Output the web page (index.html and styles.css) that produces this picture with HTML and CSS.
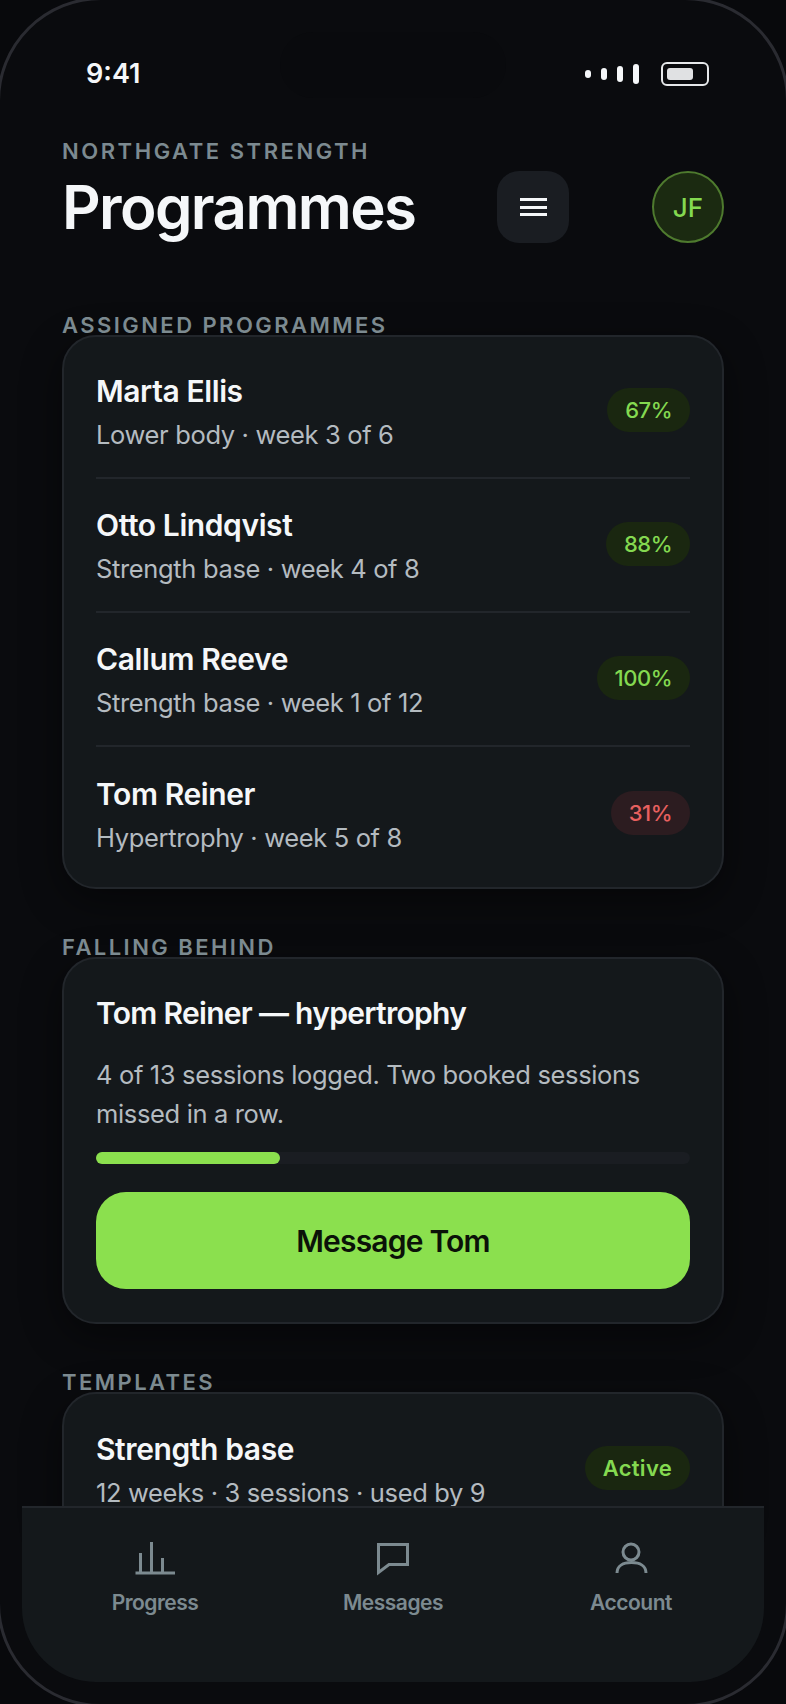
FILE: index.html
```html
<!DOCTYPE html>
<html lang="en">
<head>
    <meta charset="UTF-8">
    <meta name="viewport" content="width=device-width, initial-scale=1.0">
    <link rel="stylesheet" href="styles.css">
    <title>Programmes</title>
</head>
<body>

    <div class="phone">
        <div class="island"></div>

        <div class="status">
            <span class="time">9:41</span>
            <div class="status-icons">
                <div class="signal">
                    <span class="s1"></span>
                    <span class="s2"></span>
                    <span class="s3"></span>
                    <span class="s4"></span>
                </div>
                <div class="battery"><span></span></div>
            </div>
        </div>

        <div class="content">
            <div class="eyebrow">NORTHGATE STRENGTH</div>
            <header class="top">
                <h1>Programmes</h1>
                <button class="menu-btn" aria-label="Menu">
                    <span></span><span></span><span></span>
                </button>
                <div class="avatar">JF</div>
            </header>

            <h2 class="label first">ASSIGNED PROGRAMMES</h2>
            <section class="card list">
                <div class="row">
                    <div class="row-text">
                        <div class="name">Marta Ellis</div>
                        <div class="sub">Lower body · week 3 of 6</div>
                    </div>
                    <span class="pill">67%</span>
                </div>
                <div class="row">
                    <div class="row-text">
                        <div class="name">Otto Lindqvist</div>
                        <div class="sub">Strength base · week 4 of 8</div>
                    </div>
                    <span class="pill">88%</span>
                </div>
                <div class="row">
                    <div class="row-text">
                        <div class="name">Callum Reeve</div>
                        <div class="sub">Strength base · week 1 of 12</div>
                    </div>
                    <span class="pill">100%</span>
                </div>
                <div class="row">
                    <div class="row-text">
                        <div class="name">Tom Reiner</div>
                        <div class="sub">Hypertrophy · week 5 of 8</div>
                    </div>
                    <span class="pill red">31%</span>
                </div>
            </section>

            <h2 class="label">FALLING BEHIND</h2>
            <section class="card behind">
                <div class="name tight">Tom Reiner — hypertrophy</div>
                <p class="sub body">4 of 13 sessions logged. Two booked sessions missed in a row.</p>
                <div class="bar"><div class="bar-fill" style="width: 31%"></div></div>
                <button class="cta">Message Tom</button>
            </section>

            <h2 class="label">TEMPLATES</h2>
            <section class="card list">
                <div class="row">
                    <div class="row-text">
                        <div class="name">Strength base</div>
                        <div class="sub">12 weeks · 3 sessions · used by 9</div>
                    </div>
                    <span class="pill active">Active</span>
                </div>
            </section>
        </div>

        <nav class="tabs">
            <div class="tab">
                <svg width="44" height="36" viewBox="0 0 44 36"><path d="M2.5 33H42M7.5 33V13M18.5 33V2M29.5 33V18"/></svg>
                <span>Progress</span>
            </div>
            <div class="tab">
                <svg width="44" height="36" viewBox="0 0 44 36"><path d="M7.5 4.5H36.5V24.5H18L7.5 32.5Z"/></svg>
                <span>Messages</span>
            </div>
            <div class="tab">
                <svg width="44" height="36" viewBox="0 0 44 36"><circle cx="22" cy="12" r="8"/><path d="M8 33C8 26 14 22.5 22.5 22.5C31 22.5 37 26 37 33"/></svg>
                <span>Account</span>
            </div>
        </nav>
    </div>

</body>
</html>
```

FILE: styles.css
```css
* {
    box-sizing: border-box;
}

html, body {
    margin: 0;
    padding: 0;
}

body {
    width: 786px;
    height: 1704px;
    background-color: #08090c;
    font-family: 'Inter', sans-serif;
    color: #f5f7f9;
    overflow: hidden;
}

/* Le cadre dépasse un peu de la fenêtre : seuls les coins sont visibles */
.phone {
    position: relative;
    width: 792px;
    height: 1710px;
    margin: -3px;
    border: 3px solid #2a2b31;
    border-radius: 104px;
    background-color: #0a0b0e;
    overflow: hidden;
}

.island {
    position: absolute;
    top: 32px;
    left: 280px;
    width: 226px;
    height: 66px;
    border-radius: 33px;
    background-color: #090a0d;
}

/* Barre de statut */
.status {
    position: relative;
    display: flex;
    justify-content: space-between;
    align-items: center;
    height: 26px;
    margin-top: 61px;
    padding: 0 77px 0 86px;
}

.time {
    font-size: 27px;
    font-weight: 600;
    line-height: 26px;
}

.status-icons {
    display: flex;
    align-items: center;
    gap: 22px;
}

.signal {
    display: flex;
    align-items: center;
    gap: 10px;
}

.signal span {
    width: 6px;
    border-radius: 3px;
    background-color: #f5f7f9;
}

.s1 { height: 8px; }
.s2 { height: 12px; }
.s3 { height: 16px; }
.s4 { height: 20px; }

.battery {
    width: 48px;
    height: 24px;
    padding: 4px;
    border: 2px solid #e6e8ea;
    border-radius: 6px;
}

.battery span {
    display: block;
    width: 26px;
    height: 12px;
    border-radius: 3px;
    background-color: #e0e1e3;
}

/* Contenu */
.content {
    padding: 0 62px;
}

.eyebrow {
    margin-top: 51px;
    font-size: 22px;
    font-weight: 600;
    line-height: 26px;
    letter-spacing: 2.55px;
    color: #7c8a90;
}

.top {
    display: flex;
    align-items: center;
    margin-top: 7px;
}

h1 {
    flex: 1;
    margin: 0;
    font-size: 60px;
    font-weight: 600;
    line-height: 72px;
    letter-spacing: -1.6px;
    color: #f5f7f9;
}

.menu-btn {
    display: flex;
    flex-direction: column;
    align-items: center;
    justify-content: center;
    gap: 4.5px;
    width: 72px;
    height: 72px;
    margin-right: 83px;
    padding: 0;
    border: 0;
    border-radius: 22px;
    background-color: #1a1d22;
}

.menu-btn span {
    width: 27px;
    height: 3px;
    background-color: #f5f7f9;
}

.avatar {
    display: flex;
    align-items: center;
    justify-content: center;
    width: 72px;
    height: 72px;
    border: 2px solid #4e7a2e;
    border-radius: 50%;
    background-color: #1b2a11;
    color: #84d950;
    font-size: 26px;
    font-weight: 500;
}

.label {
    margin: 48px 0 0;
    font-size: 22px;
    font-weight: 600;
    line-height: 20px;
    letter-spacing: 2.45px;
    color: #7c8a90;
}

.label.first {
    margin-top: 72px;
}

.card {
    border: 2px solid #22262b;
    border-radius: 34px;
    background-color: #14181b;
    box-shadow: 0 12px 40px rgba(0, 0, 0, 0.45);
}

.list {
    padding: 8px 32px 6px;
}

.row {
    display: flex;
    align-items: center;
    justify-content: space-between;
    height: 134px;
    border-bottom: 2px solid #22262b;
}

.row:last-child {
    border-bottom: 0;
}

.row-text {
    padding-top: 3px;
}

.name {
    font-size: 30px;
    font-weight: 600;
    line-height: 38px;
    letter-spacing: -0.4px;
    color: #f5f7f9;
}

.name.tight {
    letter-spacing: -0.7px;
}

.sub {
    margin-top: 6px;
    font-size: 25.5px;
    font-weight: 400;
    line-height: 38px;
    letter-spacing: -0.35px;
    color: #b4bbc0;
}

.pill {
    margin-bottom: 2px;
    padding: 0 18px;
    border-radius: 22px;
    background-color: #1a2710;
    color: #84d950;
    font-size: 22px;
    font-weight: 500;
    line-height: 44px;
    letter-spacing: -0.5px;
}

.pill.active {
    font-weight: 600;
    letter-spacing: 0.3px;
}

.pill.red {
    background-color: #2c1c20;
    color: #e8605f;
}

.behind {
    padding: 35px 32px 33px;
}

.body {
    margin: 23px 0 0;
    line-height: 39px;
}

.bar {
    height: 12px;
    margin-top: 19px;
    border-radius: 6px;
    background-color: #1a1d22;
}

.bar-fill {
    height: 100%;
    border-radius: 6px;
    background-color: #8be04e;
}

.cta {
    display: block;
    width: 100%;
    height: 97px;
    margin-top: 28px;
    border: 0;
    border-radius: 30px;
    background-color: #8be04e;
    color: #0b1208;
    font-family: inherit;
    font-size: 30px;
    font-weight: 600;
    letter-spacing: -0.8px;
}

/* Barre d'onglets */
.tabs {
    position: absolute;
    left: 22px;
    top: 1506px;
    display: grid;
    grid-template-columns: repeat(3, 238px);
    justify-content: center;
    width: 742px;
    height: 176px;
    border-top: 2px solid #22262b;
    border-radius: 0 0 74px 74px;
    background-color: #14181b;
}

.tab {
    display: flex;
    flex-direction: column;
    align-items: center;
    padding-top: 32px;
    color: #7c8a90;
    font-size: 21px;
    font-weight: 600;
    letter-spacing: -0.5px;
}

.tab svg {
    display: block;
    fill: none;
    stroke: #7c8a90;
    stroke-width: 3;
}

.tab span {
    margin-top: 14px;
}
```
